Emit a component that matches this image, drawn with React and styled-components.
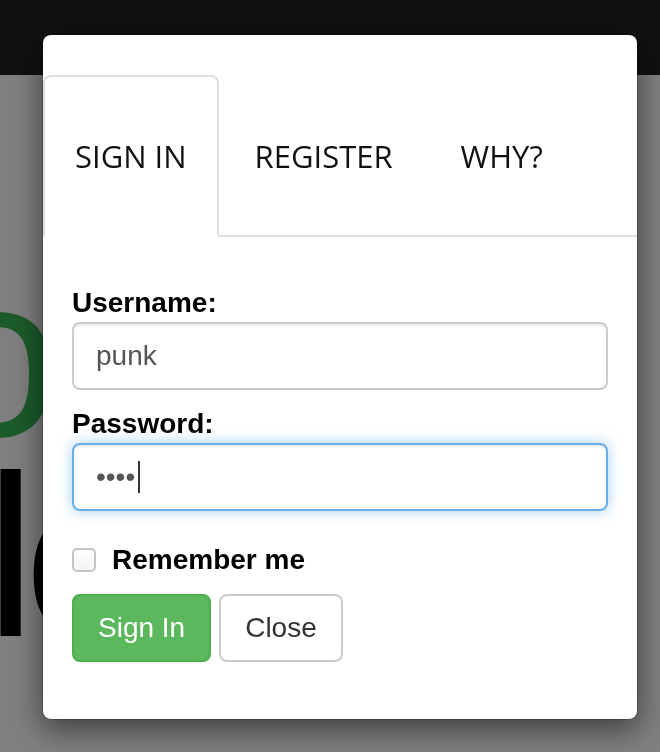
import React from 'react';
import styled, { createGlobalStyle, css } from 'styled-components';

const GlobalStyle = createGlobalStyle`
  html, body {
    margin: 0;
    padding: 0;
  }
  body {
    font-family: "Liberation Sans", Arial, sans-serif;
    background: #fff;
    overflow: hidden;
  }
`;

export default function App() {
  return (
    <>
      <GlobalStyle />
      <Page>
        <NavBar />
        <Hero>
          <GreenWord>
            <span>Go</span>
          </GreenWord>
          <BlackWord>lo</BlackWord>
        </Hero>
      </Page>
      <Overlay>
        <Modal>
          <TabList>
            <Tab $active>SIGN IN</Tab>
            <Tab>REGISTER</Tab>
            <Tab>WHY?</Tab>
          </TabList>
          <Form onSubmit={(e) => e.preventDefault()}>
            <Field>
              <Label htmlFor='username'>Username:</Label>
              <TextInput id='username' type='text' defaultValue='punk' />
            </Field>
            <Field $last>
              <Label htmlFor='password'>Password:</Label>
              <InputWrap>
                <TextInput id='password' type='password' defaultValue='punk' $focused />
                <Caret />
              </InputWrap>
            </Field>
            <CheckRow>
              <Checkbox type='checkbox' id='remember' />
              <CheckLabel htmlFor='remember'>Remember me</CheckLabel>
            </CheckRow>
            <ButtonRow>
              <Button type='submit' $variant='success'>Sign In</Button>
              <Button type='button'>Close</Button>
            </ButtonRow>
          </Form>
        </Modal>
      </Overlay>
    </>
  );
}

const Page = styled.div`
  min-height: 752px;
  background: #fff;
`;

const NavBar = styled.div`
  height: 75px;
  background: #222;
`;

const Hero = styled.div`
  padding-top: 182px;
  font-family: "Liberation Sans", Arial, sans-serif;
  font-size: 230px;
  line-height: 200px;
  white-space: nowrap;
`;

const GreenWord = styled.div`
  width: 60px;
  display: flex;
  justify-content: flex-end;
  color: #37b653;
`;

const BlackWord = styled.div`
  margin-left: -15px;
  letter-spacing: -12px;
  color: #000;
`;

const Overlay = styled.div`
  position: fixed;
  inset: 0;
  background: rgba(0, 0, 0, 0.5);
  padding: 34px 0 0 42px;
  box-sizing: border-box;
`;

const Modal = styled.div`
  width: 596px;
  box-sizing: border-box;
  background: #fff;
  border: 1px solid rgba(0, 0, 0, 0.2);
  border-radius: 9px;
  box-shadow: 0 10px 30px rgba(0, 0, 0, 0.5);
  padding: 40px 0 57px;
  background-clip: padding-box;
`;

const TabList = styled.div`
  display: flex;
  border-bottom: 2px solid #ddd;
`;

const Tab = styled.div`
  height: 162px;
  box-sizing: border-box;
  margin-bottom: -2px;
  margin-right: 4px;
  padding: 0 30px;
  display: flex;
  align-items: center;
  border: 2px solid transparent;
  border-radius: 8px 8px 0 0;
  font-family: "Open Sans", "Noto Sans", sans-serif;
  font-size: 31px;
  color: #111;
  cursor: pointer;

  ${(p) => p.$active && css`
    border-color: #ddd #ddd transparent;
    background: #fff;
  `}
`;

const Form = styled.form`
  padding: 50px 29px 0;
`;

const Field = styled.div`
  margin-bottom: ${(p) => (p.$last ? '0' : '18px')};
`;

const Label = styled.label`
  display: block;
  font-weight: bold;
  font-size: 28px;
  line-height: 32px;
  margin-bottom: 3px;
  color: #000;
`;

const InputWrap = styled.div`
  position: relative;
`;

const TextInput = styled.input`
  display: block;
  width: 100%;
  height: 68px;
  box-sizing: border-box;
  border: 2px solid #ccc;
  border-radius: 8px;
  padding: 0 22px;
  font-family: "Liberation Sans", Arial, sans-serif;
  font-size: 28px;
  color: #555;
  background: #fff;
  outline: none;
  box-shadow: inset 0 2px 2px rgba(0, 0, 0, 0.075);

  ${(p) => p.$focused && css`
    border-color: #66afe9;
    box-shadow: inset 0 2px 2px rgba(0, 0, 0, 0.075), 0 0 14px rgba(102, 175, 233, 0.6);
  `}
`;

const Caret = styled.span`
  position: absolute;
  left: 66px;
  top: 18px;
  width: 2px;
  height: 32px;
  background: #333;
`;

const CheckRow = styled.div`
  display: flex;
  align-items: center;
  gap: 16px;
  margin-top: 29px;
  height: 40px;
`;

const Checkbox = styled.input`
  appearance: none;
  margin: 0;
  width: 24px;
  height: 24px;
  box-sizing: border-box;
  border: 2px solid #c4c4c4;
  border-radius: 5px;
  background: linear-gradient(#fff, #f4f4f4);
`;

const CheckLabel = styled.label`
  font-weight: bold;
  font-size: 28px;
  line-height: 40px;
  color: #000;
`;

const ButtonRow = styled.div`
  display: flex;
  gap: 8px;
  margin-top: 14px;
`;

const Button = styled.button`
  height: 68px;
  box-sizing: border-box;
  padding: 0 24px;
  border: 2px solid #ccc;
  border-radius: 8px;
  background: #fff;
  color: #333;
  font-family: "Liberation Sans", Arial, sans-serif;
  font-size: 28px;
  cursor: pointer;

  ${(p) => p.$variant === 'success' && css`
    background: #5cb85c;
    border-color: #4cae4c;
    color: #fff;
  `}
`;
